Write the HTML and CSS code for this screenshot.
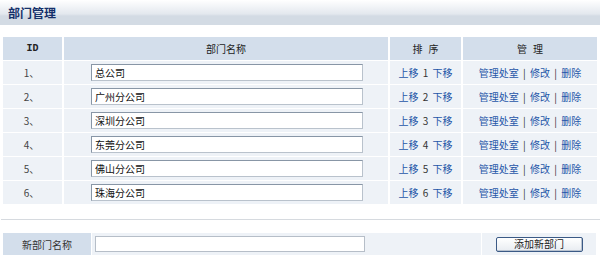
FILE: index.html
```html
<!DOCTYPE html>
<html>
<head>
<meta charset="utf-8">
<link rel="stylesheet" href="styles.css">
</head>
<body>
<div class="titlebar"><span class="title">部门管理</span></div>
<div class="wrap">
<table class="grid">
  <colgroup><col class="c-id"><col class="c-name"><col class="c-sort"><col class="c-mgr"></colgroup>
  <thead>
    <tr><th class="mono">ID</th><th>部门名称</th><th class="spaced">排 序</th><th class="spaced">管 理</th></tr>
  </thead>
  <tbody>
    <tr><td class="id">1、</td><td><input class="name" value="总公司"></td><td class="ops"><a>上移</a> 1 <a>下移</a></td><td class="ops"><a>管理处室</a> | <a>修改</a> | <a>删除</a></td></tr>
    <tr><td class="id">2、</td><td><input class="name" value="广州分公司"></td><td class="ops"><a>上移</a> 2 <a>下移</a></td><td class="ops"><a>管理处室</a> | <a>修改</a> | <a>删除</a></td></tr>
    <tr><td class="id">3、</td><td><input class="name" value="深圳分公司"></td><td class="ops"><a>上移</a> 3 <a>下移</a></td><td class="ops"><a>管理处室</a> | <a>修改</a> | <a>删除</a></td></tr>
    <tr><td class="id">4、</td><td><input class="name" value="东莞分公司"></td><td class="ops"><a>上移</a> 4 <a>下移</a></td><td class="ops"><a>管理处室</a> | <a>修改</a> | <a>删除</a></td></tr>
    <tr><td class="id">5、</td><td><input class="name" value="佛山分公司"></td><td class="ops"><a>上移</a> 5 <a>下移</a></td><td class="ops"><a>管理处室</a> | <a>修改</a> | <a>删除</a></td></tr>
    <tr><td class="id">6、</td><td><input class="name" value="珠海分公司"></td><td class="ops"><a>上移</a> 6 <a>下移</a></td><td class="ops"><a>管理处室</a> | <a>修改</a> | <a>删除</a></td></tr>
  </tbody>
</table>
</div>
<div class="rule"></div>
<div class="wrap">
<table class="addform">
  <tr>
    <th class="label">新部门名称</th>
    <td class="field"><input class="newname"></td>
    <td class="action"><button class="btn">添加新部门</button></td>
  </tr>
</table>
</div>
</body>
</html>
```
FILE: styles.css
```css
html, body {
  margin: 0;
  padding: 0;
  background: #fff;
}
body {
  font-family: "Noto Sans CJK SC", "Noto Sans", sans-serif;
  font-size: 10px;
  color: #333;
  width: 600px;
}
.titlebar {
  height: 25px;
  background: linear-gradient(to bottom, #ffffff 0px, #f3f5f8 6px, #e3e8ee 14px, #d3dbe4 16px, #d3dbe4 25px);
  display: flex;
  align-items: center;
  padding-left: 8px;
}
.title {
  font-size: 12px;
  font-weight: bold;
  color: #14306a;
  line-height: 14px;
}
.wrap {
  padding: 0 3px;
}
.grid {
  margin-top: 11px;
  border-collapse: separate;
  border-spacing: 2px 1px;
  margin-left: -2px;
  table-layout: fixed;
  width: 598px;
}
.c-id { width: 59px; }
.c-name { width: 324px; }
.c-sort { width: 71px; }
.c-mgr { width: auto; }
.grid th {
  background: #d3deeb;
  height: 23px;
  padding: 0;
  font-weight: normal;
  color: #222;
  font-size: 10px;
  text-align: center;
}
.grid th.mono {
  font-family: "Liberation Mono", "DejaVu Sans Mono", monospace;
  font-weight: bold;
  font-size: 10px;
}
.grid th.spaced {
  word-spacing: 4px;
}
.grid td {
  background: #eef2f7;
  height: 23px;
  padding: 0;
  text-align: center;
  color: #333;
}
.grid td.ops {
  word-spacing: 2px;
}
.grid td.id { color: #444; padding-right: 2px; }
a {
  color: #1f56a8;
  cursor: pointer;
}
input.name {
  box-sizing: border-box;
  width: 272px;
  height: 17px;
  margin: 0;
  padding: 0 3px;
  border: 1px solid #8896a6;
  border-right-color: #b9c2cc;
  border-bottom-color: #b9c2cc;
  font-family: "Noto Sans CJK SC", sans-serif;
  font-size: 10px;
  color: #111;
  background: #fff;
  display: block;
  margin-left: 27px;
}
.rule {
  margin-top: 14px;
  height: 0;
  border-top: 1px solid #d6dadf;
  margin-left: 1px;
}
.addform {
  margin-top: 13px;
  border-collapse: separate;
  border-spacing: 1px 0;
  margin-left: -1px;
  width: 595px;
  table-layout: fixed;
}
.addform .label {
  width: 88px;
  background: #d3deeb;
  font-weight: normal;
  font-size: 10px;
  color: #333;
  height: 22px;
  padding: 0;
  text-align: center;
}
.addform .field {
  width: 386px;
  background: #eef2f7;
  padding: 0 0 0 3px;
}
.addform .action {
  background: #eef2f7;
  text-align: center;
  padding: 0;
}
input.newname {
  box-sizing: border-box;
  width: 270px;
  height: 16px;
  display: block;
  margin: 0;
  border: 1px solid #b6bec8;
  background: #fff;
}
.btn {
  box-sizing: border-box;
  width: 87px;
  height: 15px;
  padding: 0;
  font-family: "Noto Sans CJK SC", sans-serif;
  font-size: 10px;
  line-height: 12px;
  color: #222;
  border: 1px solid #3b5a86;
  border-radius: 2px;
  background: linear-gradient(to bottom, #ffffff, #e8ecf1);
  box-shadow: inset -1px -1px 0 #b9c3d0;
}
```
